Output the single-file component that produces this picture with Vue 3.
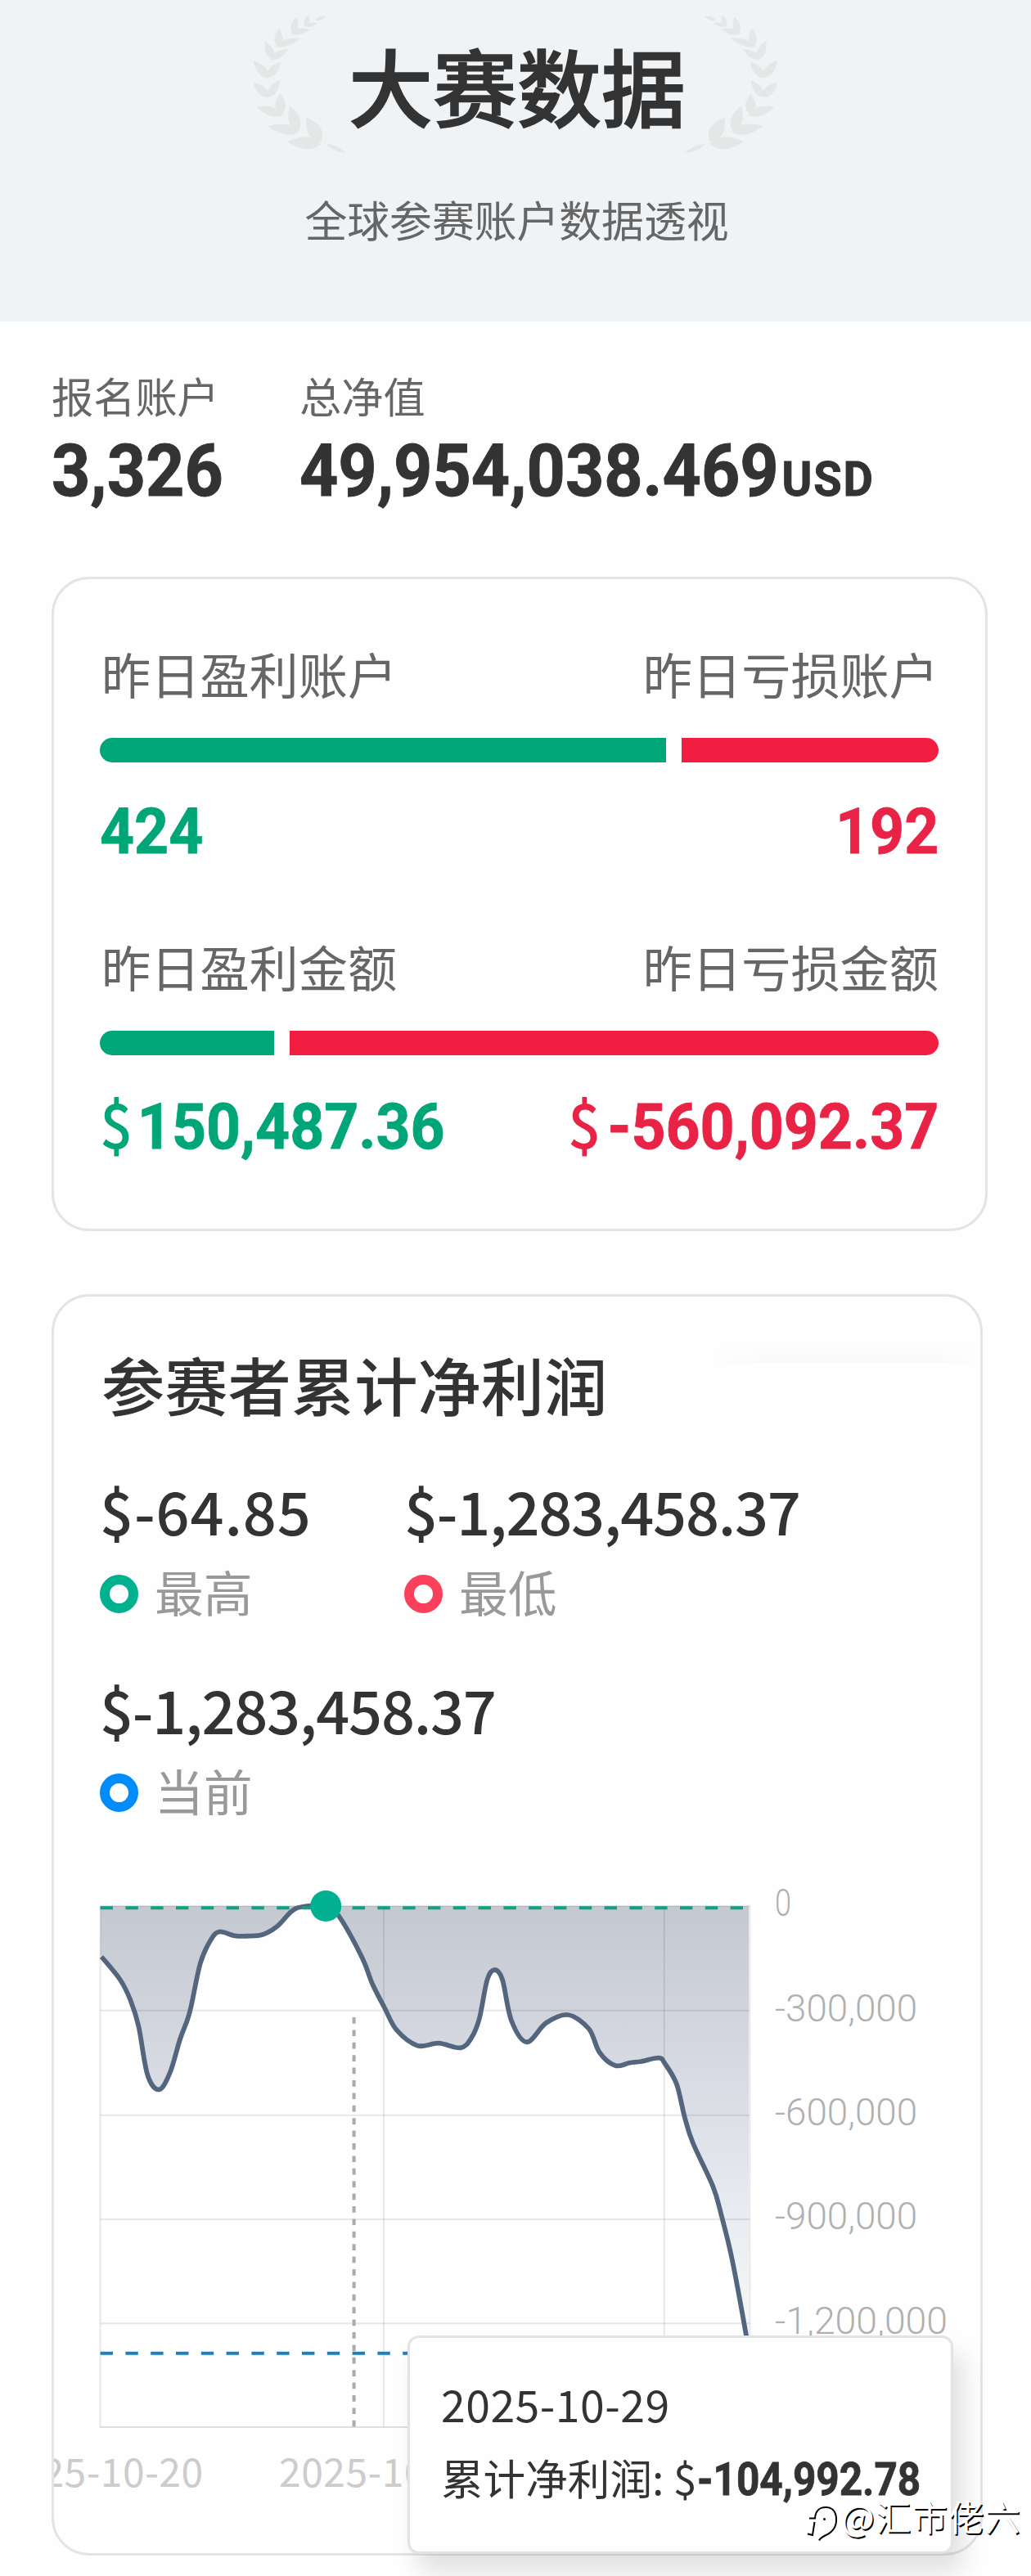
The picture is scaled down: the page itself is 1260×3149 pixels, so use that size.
<script setup>
import { computed } from 'vue';

const totals = [
  { label: '报名账户', value: '3,326', unit: '' },
  { label: '总净值', value: '49,954,038.469', unit: 'USD' },
];

const comparisons = [
  { winLabel: '昨日盈利账户', loseLabel: '昨日亏损账户', win: '424', lose: '192', currency: '', share: 67.5 },
  {
    winLabel: '昨日盈利金额',
    loseLabel: '昨日亏损金额',
    win: '150,487.36',
    lose: '-560,092.37',
    currency: '$',
    share: 20.75,
  },
];

const stats = [
  { value: '$-64.85', label: '最高', tone: 'high' },
  { value: '$-1,283,458.37', label: '最低', tone: 'low' },
  { value: '$-1,283,458.37', label: '当前', tone: 'current' },
];

// base x, base y, tip x, tip y, half width
const leaves = [
  [280, 528, 155, 520, 36], [280, 520, 226, 430, 40],
  [200, 484, 85, 462, 30], [196, 482, 165, 388, 34],
  [140, 422, 44, 392, 26], [132, 420, 130, 343, 30],
  [88, 356, 32, 302, 26], [84, 356, 130, 293, 24],
  [88, 286, 32, 222, 26], [80, 286, 134, 226, 24],
  [106, 220, 74, 150, 24], [96, 218, 160, 180, 20],
  [122, 172, 126, 103, 24], [112, 170, 205, 140, 20],
  [176, 124, 190, 62, 22], [168, 122, 240, 108, 18],
  [222, 94, 236, 54, 16], [214, 94, 268, 86, 12],
  [258, 74, 302, 60, 10], [298, 528, 374, 562, 13],
];

const leafPath = ([x1, y1, x2, y2, w]) => {
  const dx = x2 - x1;
  const dy = y2 - y1;
  const len = Math.hypot(dx, dy);
  const nx = (-dy / len) * w * 1.25;
  const ny = (dx / len) * w * 1.25;
  const cx = x1 + dx * 0.35;
  const cy = y1 + dy * 0.35;
  return `M${x1} ${y1}Q${cx + nx} ${cy + ny} ${x2} ${y2}Q${cx - nx} ${cy - ny} ${x1} ${y1}Z`;
};

const plot = { left: 122.6, right: 916.3, top: 2330, bottom: 2967 };

const points = [
  [124, 2392], [146.8, 2420], [159.4, 2445], [169.3, 2476.7], [180.4, 2536.7], [194.6, 2554.3],
  [208, 2533], [220, 2493], [231.8, 2460], [244.8, 2400], [257.5, 2371.7], [268, 2361.5],
  [287, 2366.3], [303, 2366.7], [320.7, 2365], [338.5, 2355], [356, 2336.7], [369, 2331],
  [398, 2330], [413.7, 2341.7], [442.5, 2393], [455, 2425], [469.8, 2454], [484.8, 2481.7],
  [510.5, 2500.7], [536, 2497.7], [562.7, 2503.3], [575.8, 2491.7], [585.7, 2468], [595.5, 2420],
  [604.6, 2408], [614, 2420], [625, 2470], [643.8, 2496.3], [667.3, 2473], [694, 2463],
  [719.6, 2480], [732.7, 2509], [751.8, 2525], [769.4, 2521.7], [783.7, 2520], [805, 2515.7],
  [812.7, 2522.7], [827, 2548], [836.7, 2588], [847, 2620], [871.4, 2673], [881.6, 2708],
  [894.7, 2762], [912, 2855], [915, 2877],
];

const linePath = computed(() => {
  let d = `M${points[0].join(' ')}`;
  for (let i = 0; i < points.length - 1; i++) {
    const p0 = points[i - 1] ?? points[i];
    const p1 = points[i];
    const p2 = points[i + 1];
    const p3 = points[i + 2] ?? p2;
    d += `C${p1[0] + (p2[0] - p0[0]) / 6} ${p1[1] + (p2[1] - p0[1]) / 6} `;
    d += `${p2[0] - (p3[0] - p1[0]) / 6} ${p2[1] - (p3[1] - p1[1]) / 6} ${p2[0]} ${p2[1]}`;
  }
  return d;
});

const areaPath = computed(() => `${linePath.value}V${plot.top}H${plot.left}V2391Z`);

const yTicks = [
  { y: 2330, label: '0', textY: 2342, width: 20 },
  { y: 2457.7, label: '-300,000', textY: 2470.5, width: 174 },
  { y: 2585.7, label: '-600,000', textY: 2598, width: 174 },
  { y: 2713, label: '-900,000', textY: 2725, width: 174 },
  { y: 2840.3, label: '-1,200,000', textY: 2853, width: 211 },
];

const xTicks = [
  { x: 122.6, label: '2025-10-20' },
  { x: 466.5, label: '2025-10-31' },
];
</script>

<template>
  <main class="page">
    <header class="hero">
      <svg class="laurel" viewBox="0 0 420 600">
        <path v-for="(leaf, i) in leaves" :key="i" :d="leafPath(leaf)" />
      </svg>
      <div class="hero-text">
        <h1>大赛数据</h1>
        <p>全球参赛账户数据透视</p>
      </div>
      <svg class="laurel flipped" viewBox="0 0 420 600">
        <path v-for="(leaf, i) in leaves" :key="i" :d="leafPath(leaf)" />
      </svg>
    </header>

    <section class="totals">
      <div v-for="item in totals" :key="item.label" class="total">
        <div class="total-label">{{ item.label }}</div>
        <div class="total-value">
          <span>{{ item.value }}<small v-if="item.unit">{{ item.unit }}</small></span>
        </div>
      </div>
    </section>

    <section class="card compare">
      <div v-for="row in comparisons" :key="row.winLabel" class="row">
        <div class="row-labels">
          <span>{{ row.winLabel }}</span>
          <span>{{ row.loseLabel }}</span>
        </div>
        <div class="bar">
          <div class="bar-win" :style="{ width: row.share + '%' }"></div>
          <div class="bar-lose"></div>
        </div>
        <div class="row-values">
          <span class="win"><i v-if="row.currency">{{ row.currency }}</i>{{ row.win }}</span>
          <span class="lose"><i v-if="row.currency">{{ row.currency }}</i>{{ row.lose }}</span>
        </div>
      </div>
    </section>

    <section class="card profit">
      <div class="smudge"></div>
      <h2>参赛者累计净利润</h2>
      <div class="stats">
        <div v-for="stat in stats" :key="stat.label" class="stat">
          <div class="stat-value" :class="stat.tone">{{ stat.value }}</div>
          <div class="stat-label"><span class="ring" :class="stat.tone"></span>{{ stat.label }}</div>
        </div>
      </div>

      <svg class="chart" viewBox="66 2300 1132 821">
        <defs>
          <linearGradient id="area" gradientUnits="userSpaceOnUse" x1="0" :y1="plot.top" x2="0" y2="2900">
            <stop offset="0" stop-color="#c4c8d1" />
            <stop offset="0.5" stop-color="#dfe2e9" />
            <stop offset="0.8" stop-color="#f0f3f5" />
            <stop offset="1" stop-color="#f8f9fb" />
          </linearGradient>
        </defs>
        <path :d="areaPath" fill="url(#area)" />
        <g class="grid">
          <line v-for="t in yTicks" :key="t.y" :x1="plot.left" :x2="plot.right" :y1="t.y" :y2="t.y" />
          <line v-for="x in [plot.left, 469, 811.8, plot.right]" :key="x" :x1="x" :x2="x" :y1="plot.top" :y2="plot.bottom" />
          <line class="base" :x1="plot.left" :x2="plot.right" :y1="plot.bottom" :y2="plot.bottom" />
        </g>
        <line class="pointer" x1="432.6" x2="432.6" y1="2466" :y2="plot.bottom" />
        <path class="line" :d="linePath" />
        <line class="mark high" :x1="plot.left" :x2="plot.right" y1="2332.3" y2="2332.3" />
        <line class="mark current" :x1="plot.left" :x2="plot.right" y1="2876.7" y2="2876.7" />
        <circle cx="398.2" cy="2330" r="19" fill="#00b090" />
        <text
          v-for="t in yTicks"
          :key="t.label"
          class="y-label"
          x="947"
          :y="t.textY"
          :textLength="t.width"
          lengthAdjust="spacingAndGlyphs"
        >{{ t.label }}</text>
        <text
          v-for="t in xTicks"
          :key="t.label"
          class="x-label"
          :x="t.x"
          y="3040"
          textLength="251"
        >{{ t.label }}</text>
      </svg>

      <div class="tooltip">
        <div class="tooltip-date">2025-10-29</div>
        <div class="tooltip-row">累计净利润: $<b>-104,992.78</b></div>
      </div>
    </section>

    <div class="watermark">
      <svg viewBox="0 0 42 48">
        <path class="shade" d="M1 32.5l6 1.500 2.500-16M3 13.500h7c.5-8 5-14 14-13.500 8.500.5 12.500 7 12 17-.5 10-8 15-13.500 17.500-4 2-6 3-7.500 6" />
        <circle cx="21.5" cy="14.5" r="1.5" />
      </svg>
      <span>@汇市佬六</span>
    </div>
  </main>
</template>

<style>
body {
  margin: 0;
  background: #fff;
}
</style>

<style scoped>
.page {
  position: relative;
  width: 1260px;
  height: 3149px;
  overflow: hidden;
  background: #fefefe;
  color: #333;
  font-family: 'Noto Sans CJK SC', sans-serif;
}

.hero {
  display: flex;
  justify-content: center;
  height: 393px;
  background: #eff3f6;
}

.hero-text {
  width: 520px;
  margin: 0 -69px;
  padding-top: 44px;
  text-align: center;
}

.laurel {
  width: 140px;
  height: 200px;
  fill: #e5e7e7;
}

.flipped {
  transform: scaleX(-1);
}

h1 {
  margin: 0;
  padding-left: 4px;
  font-size: 103px;
  line-height: 120px;
  font-weight: 500;
  -webkit-text-stroke: 1.6px;
}

.hero p {
  margin: 74px -20px 0;
  padding-left: 3px;
  font-size: 51.8px;
  line-height: 60px;
  color: #666;
}

.totals {
  display: flex;
  padding: 60px 63px 0;
}

.total {
  min-width: 303px;
}

.total-label {
  font-size: 51.2px;
  line-height: 60px;
  color: #666;
}

.total-value {
  height: 90px;
  margin-top: 18px;
  font: 700 88.6px/90px Roboto, sans-serif;
  white-space: nowrap;
}

.total-value span {
  display: inline-block;
  transform: scaleX(0.932);
  transform-origin: left;
  -webkit-text-stroke: 1px;
}

small {
  margin-left: 4px;
  font-size: 60px;
  letter-spacing: 2px;
}

.card {
  border: 3px solid #e4e4e4;
  border-radius: 46px;
  box-sizing: border-box;
}

.compare {
  width: 1144px;
  height: 800px;
  margin: 84px 0 0 63px;
  padding: 80px 57px 0 56px;
}

.row {
  margin-bottom: 90px;
}

.row-labels,
.row-values {
  display: flex;
  justify-content: space-between;
}

.row-labels {
  padding-left: 2px;
  font-size: 60.2px;
  line-height: 70px;
  color: #666;
}

.bar {
  display: flex;
  gap: 19px;
  height: 30px;
  margin: 44px 0;
  border-radius: 15px;
  overflow: hidden;
}

.bar-win {
  flex: none;
  background: #00a678;
}

.bar-lose {
  flex: 1;
  background: #f11e42;
}

.row-values {
  height: 80px;
  font: 700 78px/82px Roboto, sans-serif;
}

.row-values span {
  transform: scaleX(0.94);
  transform-origin: left;
  -webkit-text-stroke: 0.8px;
}

.row-values .win {
  color: #00a578;
}

.row-values .lose {
  color: #e92345;
  transform-origin: right;
}

.row-values i {
  margin-right: 6px;
  font: 500 75px/1 'Noto Sans CJK SC', sans-serif;
  -webkit-text-stroke: 0;
}

.row-values .lose i {
  margin-right: 9px;
}

.profit {
  position: relative;
  width: 1138px;
  height: 1542px;
  margin: 77px 0 0 63px;
  padding-top: 61px;
}

.smudge {
  position: absolute;
  top: 54px;
  right: 0;
  width: 330px;
  height: 27px;
  background: linear-gradient(#fefefe, #f8f8f8);
  mask-image: linear-gradient(90deg, transparent, #000 25%, #000 80%, transparent);
}

h2 {
  margin: 0 58px;
  font-size: 77.3px;
  line-height: 90px;
  font-weight: 500;
}

.stats {
  display: grid;
  grid-template-columns: 372px 560px;
  row-gap: 73px;
  margin: 70px 0 0 56px;
}

.stat-value {
  font-size: 72px;
  line-height: 80px;
  font-weight: 500;
  letter-spacing: -1.2px;
}

.stat-value.high {
  letter-spacing: 0.9px;
}

.stat-label {
  display: flex;
  align-items: center;
  gap: 20px;
  height: 60px;
  margin-top: 29px;
  margin-bottom: 1px;
  font-size: 59.8px;
  line-height: 60px;
  color: #999;
}

.ring {
  width: 47px;
  height: 47px;
  margin-top: 7px;
  box-sizing: border-box;
  border: 12px solid;
  border-radius: 50%;
}

.ring.high {
  border-color: #00b190;
}

.ring.low {
  border-color: #fb405b;
}

.ring.current {
  border-color: #008cfa;
}

.chart {
  display: block;
  width: 1132px;
  height: 821px;
  margin-top: 81px;
}

.grid line {
  stroke: #000;
  stroke-opacity: 0.09;
  stroke-width: 2;
}

.grid .base {
  stroke-opacity: 0.12;
}

.line {
  fill: none;
  stroke: #54667d;
  stroke-width: 5.8;
}

.pointer {
  stroke: #aaa;
  stroke-width: 4;
  stroke-dasharray: 7.7;
}

.mark {
  stroke-width: 4;
  stroke-dasharray: 15.4;
}

.mark.high {
  stroke: #10a184;
}

.mark.current {
  stroke: #1a82bb;
}

.y-label {
  font: 300 46px Roboto, sans-serif;
  fill: #b0b0b0;
}

.x-label {
  font-size: 48px;
  fill: #ccc;
  text-anchor: middle;
}

.tooltip {
  position: absolute;
  left: 432px;
  top: 1270px;
  width: 667px;
  height: 267px;
  padding: 45px 39px 0 38px;
  box-sizing: border-box;
  border: 3px solid #e3e3e3;
  border-radius: 14px;
  background: #fefefe;
  box-shadow: 12px 22px 30px rgba(0, 0, 0, 0.12);
}

.tooltip-date {
  font-size: 53.5px;
  line-height: 70px;
  letter-spacing: 0.5px;
}

.tooltip-row {
  margin-top: 20px;
  font-size: 51.6px;
  line-height: 70px;
  white-space: nowrap;
}

.tooltip b {
  display: inline-block;
  font: 700 55px/1 Roboto, sans-serif;
  transform: scaleX(0.9);
  transform-origin: left;
  -webkit-text-stroke: 0.8px;
}

.watermark {
  position: absolute;
  left: 986px;
  top: 3051px;
  display: flex;
  color: #fff;
  font-size: 43px;
  line-height: 48px;
  letter-spacing: 1.5px;
  text-shadow: 1.5px 1.5px 0.5px #000;
}

.watermark svg {
  width: 42px;
  height: 48px;
  margin-top: 14px;
  overflow: visible;
}

.watermark .shade {
  fill: none;
  stroke: #000;
  stroke-width: 2;
}
</style>
